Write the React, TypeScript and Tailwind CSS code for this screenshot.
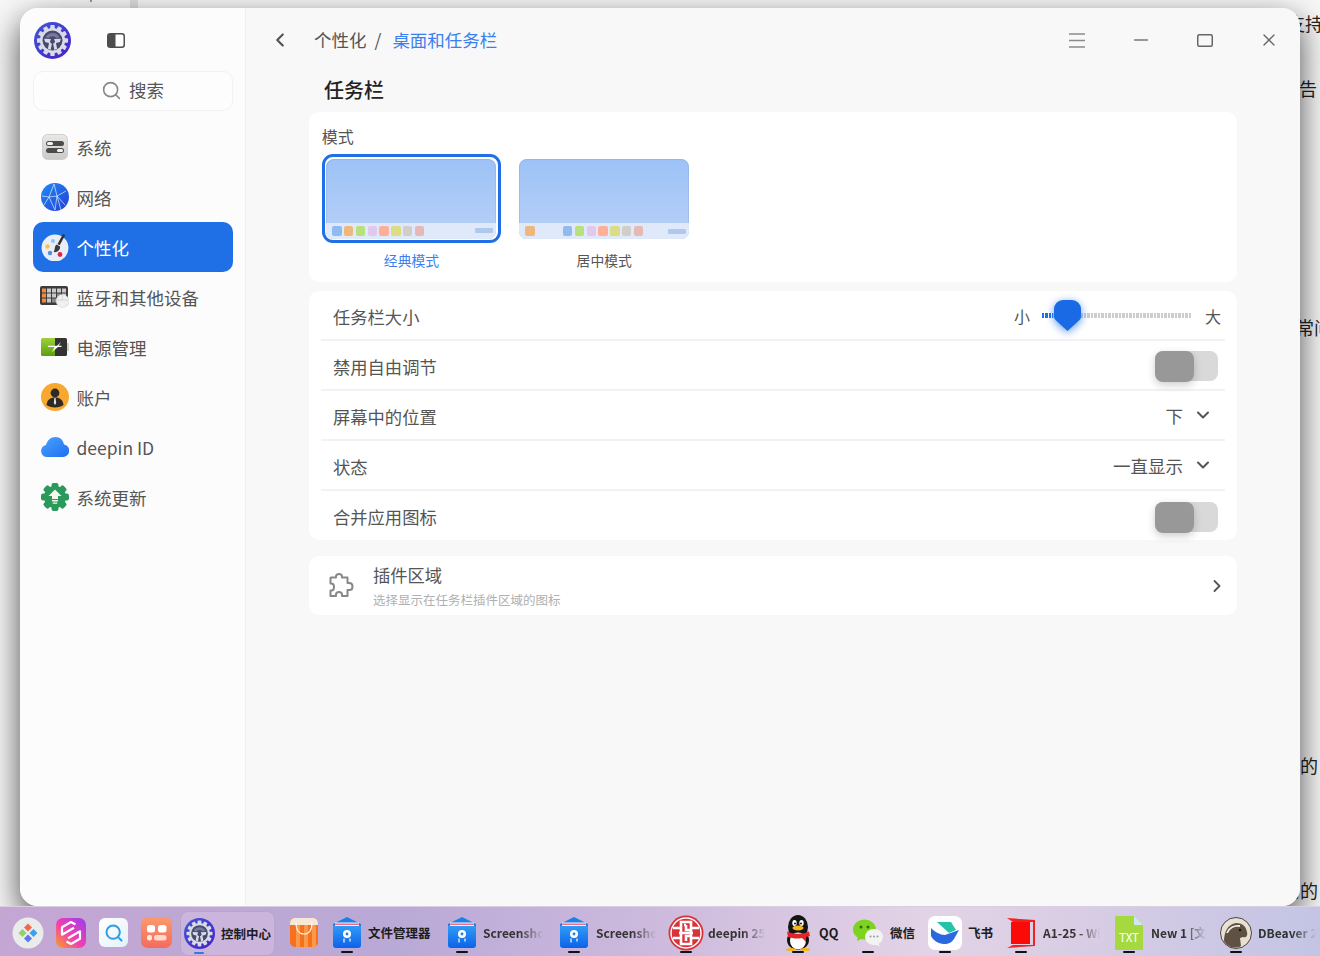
import type { ReactNode } from 'react'
import { ChevronDown, ChevronLeft, ChevronRight, Minus, Search, X } from 'lucide-react'

function GearLogo({ size }: { size: number }) {
  const teeth = [0, 30, 60, 90, 120, 150, 180, 210, 240, 270, 300, 330]
  return (
    <svg width={size} height={size} viewBox="0 0 40 40">
      <defs>
        <linearGradient id="gearBg" x1="0" y1="0" x2="1" y2="1">
          <stop offset="0" stopColor="#3f57d8" />
          <stop offset="1" stopColor="#4a1fc9" />
        </linearGradient>
      </defs>
      <circle cx="20" cy="20" r="20" fill="url(#gearBg)" />
      {teeth.map((a) => (
        <rect key={a} x="17.6" y="3.2" width="4.8" height="5" rx="1" fill="#d9dbe6" transform={`rotate(${a} 20 20)`} />
      ))}
      <circle cx="20" cy="20" r="13.6" fill="#d9dbe6" />
      <circle cx="20" cy="20" r="10.8" fill="#474b70" />
      <path d="M12.5 16.5a8.5 8.5 0 0 1 15 0l-3 1.2a5.5 5.5 0 0 0-9 0z" fill="#767a98" />
      <path d="M20 20l3.2 0 1.8 9-3 1.2zM20 20l-3.2 0-1.8 9 3 1.2z" fill="#d9dbe6" />
      <path d="M11 18l7 .5 2 3-1 2-7-2zM29 18l-7 .5-2 3 1 2 7-2z" fill="#d9dbe6" />
      <circle cx="20" cy="21" r="2.6" fill="#474b70" />
    </svg>
  )
}

function SystemIcon() {
  return (
    <svg width="26" height="26" viewBox="0 0 26 26">
      <defs>
        <linearGradient id="sysBg" x1="0" y1="0" x2="0" y2="1">
          <stop offset="0" stopColor="#e9e9e7" />
          <stop offset="1" stopColor="#c9c9c7" />
        </linearGradient>
      </defs>
      <rect x="0.5" y="0.5" width="25" height="25" rx="5" fill="url(#sysBg)" stroke="#cfcfcd" />
      <rect x="4" y="7" width="18" height="5" rx="2.5" fill="#4b4b4b" />
      <rect x="5" y="8" width="6" height="3" rx="1.5" fill="#f2f2f2" />
      <rect x="4" y="14" width="18" height="5" rx="2.5" fill="#4b4b4b" />
      <rect x="15" y="15" width="6" height="3" rx="1.5" fill="#f2f2f2" />
    </svg>
  )
}

function NetworkIcon() {
  return (
    <svg width="28" height="28" viewBox="0 0 28 28">
      <defs>
        <linearGradient id="netBg" x1="0" y1="0" x2="1" y2="1">
          <stop offset="0" stopColor="#1f8bf5" />
          <stop offset="1" stopColor="#2340d8" />
        </linearGradient>
      </defs>
      <circle cx="14" cy="14" r="14" fill="url(#netBg)" />
      <path d="M13 1L8 14l-5 8M13 1l3 12 8 9M8 14l8-1 9-5M8 14l6 13M16 13l-2 14M1 13l7 1M16 13l4 14" stroke="#e4ecff" strokeWidth="0.7" fill="none" />
    </svg>
  )
}

function PaletteIcon() {
  return (
    <svg width="28" height="28" viewBox="0 0 28 28">
      <circle cx="14" cy="15" r="13.5" fill="#e9eef6" />
      <circle cx="6.5" cy="13.5" r="2.2" fill="#f7c23c" />
      <circle cx="12" cy="8" r="2" fill="#8fc3f5" />
      <circle cx="9" cy="20" r="2.2" fill="#4b8fe8" />
      <circle cx="19" cy="21.5" r="2.4" fill="#e2244a" />
      <path d="M22 1l2.2 1.2-5.5 10-2.2-1.2z" fill="#333" />
      <path d="M15.5 11.5l3.6 2c.3 3-2 6-6.5 5.6 1.6-1.8.6-5.6 2.9-7.6z" fill="#3b3b3b" />
    </svg>
  )
}

function KeyboardIcon() {
  const keys = ['#f08a45', '#c9c9c9', '#c9c9c9', '#c9c9c9', '#c9c9c9', '#f08a45', '#c9c9c9', '#c9c9c9', '#8a8a8a', '#c9c9c9', '#f08a45', '#c9c9c9', '#8a8a8a', '#8a8a8a', '#8a8a8a']
  return (
    <svg width="29" height="22" viewBox="0 0 29 22">
      <rect x="0" y="0" width="28" height="19" rx="2" fill="#3c3c3c" />
      {keys.map((c, i) => (
        <rect key={i} x={2 + (i % 5) * 5} y={2.5 + Math.floor(i / 5) * 5} width="4" height="4" fill={c} />
      ))}
      <ellipse cx="22.5" cy="15" rx="6.5" ry="6.5" fill="#f0f0f0" stroke="#d0d0d0" strokeWidth="0.5" />
      <path d="M22.5 9v5M17 14h11" stroke="#c8c8c8" strokeWidth="0.6" />
    </svg>
  )
}

function BatteryIcon() {
  return (
    <svg width="28" height="18" viewBox="0 0 28 18">
      <defs>
        <linearGradient id="batBg" x1="0" y1="0" x2="0" y2="1">
          <stop offset="0" stopColor="#9ed13a" />
          <stop offset="1" stopColor="#5c9e10" />
        </linearGradient>
      </defs>
      <rect x="25.5" y="5" width="2.5" height="8" fill="#cfcfcf" />
      <path d="M1.5 0H14v18H1.5A1.5 1.5 0 0 1 0 16.5v-15A1.5 1.5 0 0 1 1.5 0z" fill="url(#batBg)" />
      <path d="M14 0h10.5A1.5 1.5 0 0 1 26 1.5v15a1.5 1.5 0 0 1-1.5 1.5H14z" fill="#333" />
      <path d="M20 4l-4 3.8H7l-.2 1.2h6.8L11 14l6-5h3.4l.2-1.2h-3z" fill="#fff" />
    </svg>
  )
}

function AccountIcon() {
  return (
    <svg width="28" height="28" viewBox="0 0 28 28">
      <circle cx="14" cy="14" r="14" fill="#f9a82f" />
      <circle cx="14" cy="10" r="4.4" fill="#2f2a26" />
      <path d="M5.5 22c.5-5 3.5-7.5 8.5-7.5s8 2.5 8.5 7.5c-2 1.6-5 2.4-8.5 2.4S7.5 23.6 5.5 22z" fill="#2f2a26" />
      <path d="M13.4 15h1.2l.6 5-1.2 2-1.2-2z" fill="#e8e8e8" />
    </svg>
  )
}

function CloudIcon() {
  return (
    <svg width="28" height="20" viewBox="0 0 28 20">
      <defs>
        <linearGradient id="cloudBg" x1="0" y1="0" x2="1" y2="1">
          <stop offset="0" stopColor="#4aa3ff" />
          <stop offset="1" stopColor="#1f6ff0" />
        </linearGradient>
      </defs>
      <path d="M6 20a6 6 0 0 1-1-11.9C6 3.5 10 0 14.5 0c4.5 0 7.8 3 8.5 7.5A6.3 6.3 0 0 1 22 20z" fill="url(#cloudBg)" />
    </svg>
  )
}

function UpdateIcon() {
  const teeth = [0, 45, 90, 135, 180, 225, 270, 315]
  return (
    <svg width="28" height="28" viewBox="0 0 28 28">
      {teeth.map((a) => (
        <rect key={a} x="10.5" y="0" width="7" height="7" rx="2" fill="#2a9a5b" transform={`rotate(${a} 14 14)`} />
      ))}
      <circle cx="14" cy="14" r="11" fill="#2a9a5b" />
      <path d="M14 6.5l6.5 6.5H17v3h-6v-3H7.5z" fill="#f2f8ee" />
      <path d="M11 17h6v1.4h-6zM11.8 19.4h4.4v1.4h-4.400z" fill="#f2f8ee" />
    </svg>
  )
}

function PuzzleIcon() {
  return (
    <svg width="25" height="25" viewBox="0 0 25 25" fill="none" stroke="#888" strokeWidth="2" strokeLinejoin="round">
      <path d="M2 4.500H7V3.500C7 1.500 8.200 1 10 1C11.800 1 13 1.500 13 3.500V4.500H18.500V10H20.500C22.500 10 23.500 11.200 23.500 13.500C23.500 15.800 22.500 17 20.500 17H18.500V23H13V21.500C13 19.800 12 19 10 19C8 19 7 19.800 7 21.500V23H1.500V17.500H2.500C4.200 17.500 5 16 5 14C5 12 4.200 10.500 2.500 10.500H1.500V5Z" />
    </svg>
  )
}

function ModePreview({ first, rest }: { first: string[]; rest: string[] }) {
  return (
    <div className="flex h-[80px] w-[170px] flex-col overflow-hidden rounded-[8px] bg-gradient-to-b from-[#9dc2f7] to-[#b7d1f6] shadow-[inset_0_0_0_1px_rgba(120,150,200,0.25)]">
      <div className="flex-1" />
      <div className="flex h-[16px] items-center gap-[2px] bg-[#dfe9f9] pl-[6px] pr-[3px]">
        {first.map((c) => (
          <span key={c} className="mr-[0.3px] h-[10px] w-[9.5px] rounded-[2px]" style={{ backgroundColor: c }} />
        ))}
        <span className={rest.length ? 'w-[24px]' : 'hidden'} />
        {rest.map((c) => (
          <span key={c} className="mr-[0.3px] h-[10px] w-[9.5px] rounded-[2px]" style={{ backgroundColor: c }} />
        ))}
        <div className="flex-1" />
        <span className="h-[5px] w-[18px] rounded-[1px] bg-[#aec8ee]" />
      </div>
    </div>
  )
}

const navItems: { label: string; icon: ReactNode; active?: boolean }[] = [
  { label: '系统', icon: <SystemIcon /> },
  { label: '网络', icon: <NetworkIcon /> },
  { label: '个性化', icon: <PaletteIcon />, active: true },
  { label: '蓝牙和其他设备', icon: <KeyboardIcon /> },
  { label: '电源管理', icon: <BatteryIcon /> },
  { label: '账户', icon: <AccountIcon /> },
  { label: 'deepin ID', icon: <CloudIcon /> },
  { label: '系统更新', icon: <UpdateIcon /> },
]

function Sidebar() {
  return (
    <aside className="flex w-[226px] shrink-0 flex-col border-r border-[#f1f1f1] bg-[#fcfcfc] px-[12.5px]">
      <div className="flex h-[63px] shrink-0 items-center gap-[36px] pl-[1.5px] pt-[2px]">
        <GearLogo size={37} />
        <svg width="18" height="15" viewBox="0 0 18 15">
          <rect x="0.75" y="0.75" width="16.5" height="13.5" rx="2.5" fill="#fff" stroke="#4d4d4d" strokeWidth="1.5" />
          <path d="M3 1h5.5v13H3a2 2 0 0 1-2-2V3a2 2 0 0 1 2-2z" fill="#4d4d4d" />
        </svg>
      </div>
      <div className="flex h-[40px] w-[200px] shrink-0 items-center justify-center gap-[7px] rounded-[10px] border border-[#f2f2f2] bg-[#fdfdfd] pb-[2px] text-[17.5px] text-[#555]">
        <Search size={21} strokeWidth={1.8} className="text-[#888]" />
        <span>搜索</span>
      </div>
      <nav className="mt-[11px] flex w-[200px] flex-col">
        {navItems.map((n) => (
          <div
            key={n.label}
            className={
              n.active
                ? 'flex h-[50px] items-center rounded-[10px] bg-[#1f6fe6] text-[17.5px] text-white'
                : 'flex h-[50px] items-center text-[17.5px] text-[#555]'
            }
          >
            <span className="flex w-[44px] shrink-0 justify-center">{n.icon}</span>
            <span className="pt-[2px]">{n.label}</span>
          </div>
        ))}
      </nav>
    </aside>
  )
}

function Toggle() {
  return (
    <div className="mr-[7px] h-[30px] w-[63px] translate-y-[1px] rounded-[8px] bg-[#d9d9d9]">
      <div className="h-[31px] w-[39px] rounded-[8px] bg-[#989898] shadow-[0_3px_8px_rgba(0,0,0,0.2)]" />
    </div>
  )
}

function SelectValue({ value }: { value: string }) {
  return (
    <div className="mr-[12px] flex items-center gap-[10px] text-[17.5px] text-[#555]">
      <span className="translate-y-[1px]">{value}</span>
      <ChevronDown size={20} strokeWidth={2.4} className="text-[#555]" />
    </div>
  )
}

function SizeSlider() {
  return (
    <div className="mr-[4px] flex items-center text-[16px] text-[#555]">
      <span className="translate-y-[1px]">小</span>
      <div className="relative ml-[12px] mr-[14px] h-[5px] w-[149px] bg-[repeating-linear-gradient(90deg,#cdcdcd_0,#cdcdcd_2.5px,transparent_2.5px,transparent_3.5px)]">
        <div className="h-full w-[11px] bg-[repeating-linear-gradient(90deg,#1f6fe6_0,#1f6fe6_2.5px,#ffffff_2.5px,#ffffff_3.5px)]" />
        <svg width="27" height="31" viewBox="0 0 27 31" className="absolute -top-[13px] left-[12px] overflow-visible drop-shadow-[0_2px_4px_rgba(31,111,230,0.7)]">
          <path d="M13.5 31L1.5 20Q0 18.5 0 16.5V9A9 9 0 0 1 9 0H18A9 9 0 0 1 27 9V16.5Q27 18.5 25.5 20Z" fill="#1a6ae6" />
        </svg>
      </div>
      <span className="translate-y-[1px]">大</span>
    </div>
  )
}

const rows: { label: string; right: ReactNode }[] = [
  { label: '任务栏大小', right: <SizeSlider /> },
  { label: '禁用自由调节', right: <Toggle /> },
  { label: '屏幕中的位置', right: <SelectValue value="下" /> },
  { label: '状态', right: <SelectValue value="一直显示" /> },
  { label: '合并应用图标', right: <Toggle /> },
]

function MainPanel() {
  return (
    <main className="flex min-w-0 flex-1 flex-col bg-[#f8f8f8] pl-[63px] pr-[63px]">
      <header className="-mx-[63px] flex h-[64px] shrink-0 items-center pl-[23px] text-[#666]">
        <ChevronLeft size={22} strokeWidth={2.4} className="text-[#555]" />
        <div className="ml-[23px] flex items-center text-[17.5px]">
          <span className="text-[#555]">个性化</span>
          <span className="ml-[8px] text-[#555]">/</span>
          <span className="ml-[11px] text-[#3b7ff0]">桌面和任务栏</span>
        </div>
        <div className="-mr-[1px] ml-auto flex items-center">
          <span className="flex w-[64px] justify-center">
            <svg width="16" height="15" viewBox="0 0 16 15" stroke="#8a8a8a" strokeWidth="1.5">
              <path d="M0 1h16M0 7.5h16M0 14h16" />
            </svg>
          </span>
          <span className="flex w-[64px] justify-center">
            <Minus size={22} strokeWidth={1.5} className="text-[#777]" />
          </span>
          <span className="flex w-[64px] justify-center">
            <svg width="16" height="13" viewBox="0 0 16 13" fill="none" stroke="#666" strokeWidth="1.5">
              <rect x="0.75" y="0.75" width="14.5" height="11.5" rx="1.5" />
            </svg>
          </span>
          <span className="flex w-[64px] justify-center">
            <X size={20} strokeWidth={1.6} className="text-[#666]" />
          </span>
        </div>
      </header>
      <h1 className="flex h-[40px] shrink-0 items-center pb-[4px] pl-[15px] text-[20px] font-medium text-[#222]">任务栏</h1>

      <section className="h-[170px] rounded-[10px] bg-white pl-[12.7px]">
        <div className="flex h-[44px] items-center pt-[4px] text-[16px] text-[#555]">模式</div>
        <div className="flex items-start">
          <div className="flex flex-col items-center">
            <div className="-mt-[2px] w-[179.5px] rounded-[11px] border-[3px] border-[#1f6fe6] p-[1.5px]">
              <ModePreview first={['#8ebcf0', '#eeb77c', '#b8e07c', '#e2c8ec', '#ffaf99', '#dcdc85', '#d2cdc8', '#e5b9b5']} rest={[]} />
            </div>
            <span className="mt-[7px] text-[13.8px] text-[#3b7ff0]">经典模式</span>
          </div>
          <div className="ml-[18px] flex flex-col items-center">
            <div className="mt-[3px]">
              <ModePreview first={['#eeb77c']} rest={['#8ebcf0', '#b8e07c', '#e2c8ec', '#ffaf99', '#dcdc85', '#d2cdc8', '#e5b9b5']} />
            </div>
            <span className="mt-[11px] text-[13.8px] text-[#555]">居中模式</span>
          </div>
        </div>
      </section>

      <section className="mt-[9px] flex h-[249px] flex-col rounded-[10px] bg-white px-[12px]">
        {rows.map((r, i) => (
          <div
            key={r.label}
            className={
              i === rows.length - 1
                ? 'flex flex-1 items-center justify-between pl-[12px] text-[17.3px] text-[#555]'
                : 'flex h-[50px] items-center justify-between border-b-2 border-[#f2f2f2] pl-[12px] text-[17.3px] text-[#555]'
            }
          >
            <span className={i === rows.length - 1 ? 'translate-y-[1px]' : 'translate-y-[2px]'}>{r.label}</span>
            {r.right}
          </div>
        ))}
      </section>

      <section className="mt-[16px] flex h-[59px] items-center rounded-[10px] bg-white pl-[20px] pr-[10px]">
        <PuzzleIcon />
        <div className="ml-[19px] flex flex-col">
          <span className="pt-[1px] text-[17.3px] leading-[24px] text-[#555]">插件区域</span>
          <span className="mt-[3px] text-[12.5px] leading-[20px] text-[#b0b0b0]">选择显示在任务栏插件区域的图标</span>
        </div>
        <ChevronRight size={20} strokeWidth={2.2} className="ml-auto text-[#555]" />
      </section>
    </main>
  )
}

function LauncherIcon() {
  return (
    <svg width="32" height="32" viewBox="0 0 32 32">
      <circle cx="16" cy="16" r="15.5" fill="#e9eceb" />
      <path d="M16 6.5l4 4-4 4-4-4z" fill="#ef6a4c" />
      <path d="M10.5 12l4 4-4 4-4-4z" fill="#8fd16e" />
      <path d="M21.5 12l4 4-4 4-4-4z" fill="#3f9df0" />
      <path d="M16 17.5l4 4-4 4-4-4z" fill="#5a7bf0" />
    </svg>
  )
}

function HexAppIcon() {
  return (
    <svg width="30" height="30" viewBox="0 0 30 30">
      <defs>
        <linearGradient id="hexBg" x1="0" y1="1" x2="1" y2="0">
          <stop offset="0" stopColor="#f9a21e" />
          <stop offset="0.45" stopColor="#f23fb0" />
          <stop offset="1" stopColor="#9a3cf0" />
        </linearGradient>
      </defs>
      <rect width="30" height="30" rx="7" fill="url(#hexBg)" />
      <g fill="none" stroke="#fff" strokeWidth="2.2" strokeLinejoin="round">
        <path d="M19.5 6.5L15 4 6 9.2v7.5L18 9.8" />
        <path d="M10.5 23.5L15 26l9-5.2v-7.5L12 20.2" />
      </g>
    </svg>
  )
}

function SearchAppIcon() {
  return (
    <div className="flex h-[29px] w-[29px] items-center justify-center rounded-[6px] bg-gradient-to-br from-white to-[#e4f1fb]">
      <Search size={20} strokeWidth={2.4} className="text-[#2f9fe0]" />
    </div>
  )
}

function GridAppIcon() {
  return (
    <svg width="31" height="31" viewBox="0 0 31 31">
      <defs>
        <linearGradient id="gridBg" x1="0" y1="0" x2="0" y2="1">
          <stop offset="0" stopColor="#fb9a6c" />
          <stop offset="1" stopColor="#f56a5f" />
        </linearGradient>
      </defs>
      <rect width="31" height="31" rx="7" fill="url(#gridBg)" />
      <rect x="6" y="8" width="8" height="7.5" rx="2.5" fill="#fff" />
      <rect x="17" y="8" width="8.5" height="7.5" rx="2.5" fill="#fff" />
      <rect x="6" y="18" width="5" height="5.5" rx="2" fill="#ffe9dd" />
      <rect x="13" y="18" width="12.5" height="5.5" rx="2.5" fill="#ffd8c8" />
    </svg>
  )
}

function ShopIcon() {
  return (
    <svg width="28" height="29" viewBox="0 0 28 29">
      <rect y="0" width="28" height="29" rx="5" fill="#f7701d" />
      <path d="M6 3h4v26H6zM14 3h4v26h-4zM22 3h4v26h-4z" fill="#f99a4a" />
      <path d="M5 0h18a5 5 0 0 1 5 5v2H0V5a5 5 0 0 1 5-5z" fill="#f5e8d8" />
      <path d="M6 4c0 9 3 12 8 12s8-3 8-12" fill="none" stroke="#fff3e4" strokeWidth="1.2" />
    </svg>
  )
}

function FolderIcon() {
  return (
    <svg width="28" height="31" viewBox="0 0 28 31">
      <defs>
        <linearGradient id="folderBg" x1="0" y1="0" x2="0" y2="1">
          <stop offset="0" stopColor="#2f9bf7" />
          <stop offset="1" stopColor="#0d62e8" />
        </linearGradient>
      </defs>
      <path d="M0 7L14 0l14 7v3H0z" fill="#1f7fe8" />
      <rect x="2" y="5.5" width="24" height="4" fill="#f5f5f5" />
      <path d="M2 6.5h24v1.5H2z" fill="#ef6f80" />
      <path d="M0 9h28v19a3 3 0 0 1-3 3H3a3 3 0 0 1-3-3z" fill="url(#folderBg)" />
      <circle cx="14" cy="17" r="4" fill="#fff" />
      <circle cx="14" cy="17" r="1.4" fill="#1f7fe8" />
      <path d="M11 21.5v4M17 21.5v3" stroke="#fff" strokeWidth="1.2" />
    </svg>
  )
}

function DeepinIcon() {
  return (
    <svg width="36" height="36" viewBox="0 0 36 36">
      <circle cx="18" cy="18" r="17.5" fill="#d9333a" />
      <circle cx="18" cy="18" r="15" fill="none" stroke="#fff" strokeWidth="1.4" />
      <path d="M5 13h8V7h10v6h8M5 23h8v6h10v-6h8M11 18h14M18 10v5h5v6h-5v5M18 10h-2M13 14v8" fill="none" stroke="#fff" strokeWidth="2.6" />
    </svg>
  )
}

function QQIcon() {
  return (
    <svg width="28" height="36" viewBox="0 0 28 36">
      <ellipse cx="14" cy="12" rx="10" ry="12" fill="#141414" />
      <ellipse cx="14" cy="25" rx="11" ry="10" fill="#141414" />
      <ellipse cx="14" cy="26" rx="8" ry="8.5" fill="#fff" />
      <ellipse cx="10.5" cy="8" rx="2.2" ry="3" fill="#fff" />
      <ellipse cx="17.5" cy="8" rx="2.2" ry="3" fill="#fff" />
      <circle cx="11" cy="8.5" r="1" fill="#141414" />
      <circle cx="17" cy="8.5" r="1" fill="#141414" />
      <ellipse cx="14" cy="13" rx="5.5" ry="2.5" fill="#f6b61a" />
      <path d="M3 16.5c7 3 15 3 22 0l1 4.5-4 1v5l-4-4c-5 1-10 .5-14-1z" fill="#e1262a" />
      <ellipse cx="7" cy="34.5" rx="5" ry="1.5" fill="#f6b61a" />
      <ellipse cx="21" cy="34.5" rx="5" ry="1.5" fill="#f6b61a" />
    </svg>
  )
}

function WechatIcon() {
  return (
    <svg width="30" height="28" viewBox="0 0 30 28">
      <ellipse cx="11.5" cy="10.5" rx="11.5" ry="10" fill="#7ed321" />
      <path d="M5 17l-1 5 6-3z" fill="#7ed321" />
      <circle cx="8" cy="8" r="1.5" fill="#2f6a10" />
      <circle cx="15" cy="8" r="1.5" fill="#2f6a10" />
      <ellipse cx="21" cy="18" rx="9" ry="8" fill="#f3f3f3" />
      <path d="M25 24l2 3.5-5-2z" fill="#f3f3f3" />
      <circle cx="17.5" cy="17.5" r="1" fill="#9a9a9a" />
      <circle cx="21" cy="17.5" r="1" fill="#9a9a9a" />
      <circle cx="24.5" cy="17.5" r="1" fill="#9a9a9a" />
    </svg>
  )
}

function FeishuIcon() {
  return (
    <div className="flex h-[34px] w-[34px] items-center justify-center rounded-[7px] bg-white">
      <svg width="28" height="22" viewBox="0 0 28 22">
        <path d="M6 0h14l5 8-7 3z" fill="#25c2a8" />
        <path d="M0 6c4 4 9 7 14 7l14-5-5 9c-2 3-5 5-10 5C7 22 2 18 0 14z" fill="#2b68e0" />
      </svg>
    </div>
  )
}

function BookIcon() {
  return (
    <svg width="28" height="32" viewBox="0 0 28 32">
      <path d="M0 1l28 2v26L0 31l6-3h20V5H6z" fill="#f32222" />
      <rect x="4" y="5" width="19" height="22" fill="#fb0a0a" />
    </svg>
  )
}

function TxtIcon() {
  return (
    <div className="relative h-[34px] w-[28px]">
      <svg width="28" height="34" viewBox="0 0 28 34" className="absolute left-0 top-0">
        <path d="M0 1a1 1 0 0 1 1-1h18l9 9v24a1 1 0 0 1-1 1H1a1 1 0 0 1-1-1z" fill="#a6d93f" />
        <path d="M19 0l9 9h-9z" fill="#cde8f0" />
      </svg>
      <span className="absolute inset-x-0 top-[13px] text-center text-[11.5px] leading-[16px] text-white">TXT</span>
    </div>
  )
}

function BeaverIcon() {
  return (
    <svg width="32" height="32" viewBox="0 0 32 32">
      <circle cx="16" cy="16" r="15.5" fill="#e8e0d4" stroke="#4e4438" />
      <path d="M4 24c0-9 4-17 12-18 6 0 10 3 11 9 1 4-1 6-4 5l-3 1 1 8c-3 2-9 2-12 0-2-1-4-3-5-5z" fill="#5f5245" />
      <path d="M7 16c2-5 7-8 13-7" stroke="#f1ece2" strokeWidth="1.8" fill="none" />
      <circle cx="20" cy="13" r="1.2" fill="#111" />
    </svg>
  )
}

function DockLabel({ children, fade, className }: { children: string; fade?: boolean; className: string }) {
  return (
    <span
      className={
        (fade
          ? 'whitespace-nowrap text-[12px] font-semibold text-[#333] [mask-image:linear-gradient(to_right,black_60%,transparent)] '
          : 'translate-y-[1px] whitespace-nowrap text-[12.5px] font-semibold text-[#1c1c1c] ') + className
      }
    >
      {children}
    </span>
  )
}

function DockApp({ icon, label, className }: { icon: ReactNode; label?: ReactNode; className: string }) {
  return (
    <div className={'relative flex h-full shrink-0 items-center ' + className}>
      <span className="flex w-[42px] shrink-0 justify-center">{icon}</span>
      {label}
      <span className="absolute bottom-[3px] left-[15px] h-[2.5px] w-[12px] rounded-full bg-[#111]" />
    </div>
  )
}

function Dock() {
  return (
    <footer className="flex h-[50px] shrink-0 items-center border-t border-[#d8cfe0] bg-[linear-gradient(90deg,#c4a6d3_0%,#b9a9d6_30%,#cdbadd_50%,#e3d3e6_70%,#d8cde4_82%,#c3c4e4_100%)] pl-[6px] pt-[2px]">
      <div className="flex h-full w-[43px] shrink-0 items-center justify-center"><LauncherIcon /></div>
      <div className="flex h-full w-[43px] shrink-0 items-center justify-center"><HexAppIcon /></div>
      <div className="flex h-full w-[43px] shrink-0 items-center justify-center"><SearchAppIcon /></div>
      <div className="flex h-full w-[43px] shrink-0 items-center justify-center"><GridAppIcon /></div>
      <div className="relative ml-[2px] flex h-[45px] w-[95px] shrink-0 items-center self-end rounded-[8px] border border-[#b9a5cc] bg-[#ccb5dc]">
        <span className="flex w-[36px] shrink-0 justify-center"><GearLogo size={31} /></span>
        <span className="ml-[4px] translate-y-[1px] whitespace-nowrap text-[12.5px] font-semibold text-[#1c1c1c]">控制中心</span>
        <span className="absolute bottom-[1px] left-[13px] h-[2.5px] w-[10px] rounded-full bg-[#2d7ae8]" />
      </div>
      <div className="flex h-full w-[6px] shrink-0" />
      <div className="flex h-full w-[45px] shrink-0 items-center justify-center"><ShopIcon /></div>
      <DockApp className="w-[115px]" icon={<FolderIcon />} label={<DockLabel className="w-[66px]">文件管理器</DockLabel>} />
      <DockApp className="w-[112px]" icon={<FolderIcon />} label={<DockLabel fade className="w-[60px]">Screensho</DockLabel>} />
      <DockApp className="w-[112px]" icon={<FolderIcon />} label={<DockLabel fade className="ml-[1px] w-[60px]">Screensho</DockLabel>} />
      <DockApp className="w-[112px]" icon={<DeepinIcon />} label={<DockLabel fade className="ml-[1px] w-[57px]">deepin 25.</DockLabel>} />
      <DockApp className="w-[70px]" icon={<QQIcon />} label={<DockLabel className="w-[20px]">QQ</DockLabel>} />
      <DockApp className="w-[77px]" icon={<WechatIcon />} label={<DockLabel className="ml-[1px] w-[26px]">微信</DockLabel>} />
      <DockApp className="w-[76px]" icon={<FeishuIcon />} label={<DockLabel className="ml-[2px] w-[26px]">飞书</DockLabel>} />
      <DockApp className="w-[108px]" icon={<BookIcon />} label={<DockLabel fade className="ml-[1px] w-[57px]">A1-25 - Wi</DockLabel>} />
      <DockApp className="w-[107px]" icon={<TxtIcon />} label={<DockLabel fade className="ml-[1px] w-[55px]">New 1 [文</DockLabel>} />
      <DockApp className="w-[105px]" icon={<BeaverIcon />} label={<DockLabel fade className="ml-[1px] w-[58px]">DBeaver 2</DockLabel>} />
    </footer>
  )
}

export default function App() {
  return (
    <div className="relative flex h-[956px] w-[1320px] flex-col overflow-hidden bg-[#f7f7f7] font-['Noto_Sans_CJK_SC',sans-serif]">
      {/* what shows of the page behind the window */}
      <div className="absolute left-[62px] top-0 h-[8px] w-[68px] bg-[#f6f6f6]" />
      <div className="absolute left-[130px] top-0 h-[8px] w-[8px] bg-[#dedede]" />
      <div className="absolute left-[90px] top-0 h-[2px] w-[2px] bg-[#999]" />
      <span className="absolute left-[1287px] top-[10px] whitespace-nowrap text-[18px] text-[#222]">支持</span>
      <span className="absolute left-[1299px] top-[75px] whitespace-nowrap text-[18px] text-[#222]">告</span>
      <span className="absolute left-[1296px] top-[314px] whitespace-nowrap text-[18px] text-[#222]">常问</span>
      <span className="absolute left-[1300px] top-[752px] whitespace-nowrap text-[18px] text-[#222]">的</span>
      <span className="absolute left-[1282px] top-[877px] whitespace-nowrap text-[18px] text-[#222]">用的</span>

      <div className="relative flex min-h-0 flex-1 px-[20px] pt-[8px]">
        <div className="flex min-w-0 flex-1 overflow-hidden rounded-[18px] shadow-[0_12px_32px_rgba(0,0,0,0.7)]">
          <Sidebar />
          <MainPanel />
        </div>
      </div>
      <div className="relative">
        <Dock />
      </div>
    </div>
  )
}
